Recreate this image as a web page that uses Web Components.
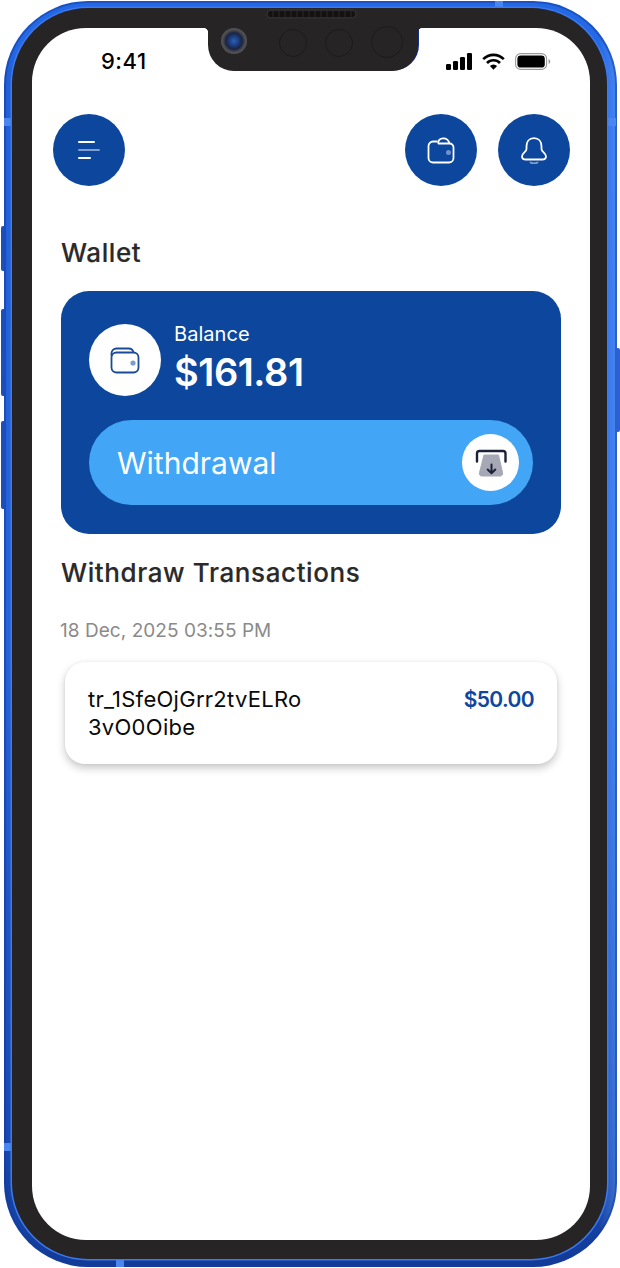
<!DOCTYPE html>
<html><head><meta charset="utf-8">
<style>
html,body{margin:0;padding:0;background:#fff;}
body{width:620px;height:1268px;overflow:hidden;font-family:"Inter","Liberation Sans",sans-serif;}
</style></head><body>
<template id="t-phone">
<style>
:host{display:block;box-sizing:border-box;position:relative;width:613px;height:1266px;margin:1px 0 0 4px;padding:7px 10px 8px 8px;border-radius:84px;
background:linear-gradient(90deg,rgba(0,0,60,.12) 0,transparent 2%,transparent 97%,rgba(120,175,255,.4) 100%),linear-gradient(180deg,#2468e6 0,#2a6ce8 50%,#1b4fbb 90%,#123a96 100%);box-shadow:inset 0 0 0 2px rgba(18,60,160,.5);}
.bezel{box-sizing:border-box;height:100%;padding:20px 17px 19px 20px;border-radius:76px;background:#272425;box-shadow:0 0 0 1.5px #3b7af0;position:relative;}
.screen{height:100%;background:#fff;border-radius:54px;overflow:hidden;}
.side{position:absolute;background:#1c4fb8;}
.l{left:-3px;width:3px;border-radius:2px 0 0 2px;}
.r{right:-3px;width:3px;border-radius:0 2px 2px 0;top:347px;height:84px;background:#2a62d6;}
.band{position:absolute;background:#4a86f0;}
.notch{position:absolute;left:196px;top:20px;width:210px;height:43px;background:#272425;border-radius:0 0 26px 26px;box-shadow:1.5px 0 0 -0.5px #15308c;}
.notch:before,.notch:after{content:"";position:absolute;top:0;width:4px;height:4px;}
.notch:before{left:-4px;background:radial-gradient(circle at 0 100%,transparent 3.6px,#272425 4.2px);}
.notch:after{right:-4px;background:radial-gradient(circle at 100% 100%,transparent 3.6px,#272425 4.2px);}
.speaker{position:absolute;left:264px;top:10px;width:87px;height:6px;border-radius:3px;background:repeating-linear-gradient(90deg,#131112 0 4px,#1f1c1d 4px 6px);box-shadow:0 0 0 2px #2e2b2c;}
.cam{position:absolute;border-radius:50%;}
.lens{left:217px;top:27px;width:26px;height:26px;background:radial-gradient(circle,#2d5fb5 0,#1d3c80 26%,#1a2440 44%,#4b4a4e 60%,#5b5a5e 80%,#3a383a 100%);}
.dot{border:1px solid #1d1b1c;box-sizing:border-box;background:#272425;}
</style>
<div class="side l" style="top:225px;height:45px"></div>
<div class="side l" style="top:308px;height:87px"></div>
<div class="side l" style="top:420px;height:88px"></div>
<div class="side r"></div>
<div class="band" style="left:0;top:117px;width:8px;height:8px"></div>
<div class="band" style="right:1px;top:117px;width:9px;height:8px"></div>
<div class="band" style="left:0;top:1142px;width:8px;height:8px"></div>
<div class="band" style="left:112px;bottom:0;width:8px;height:8px"></div>
<div class="band" style="left:491px;top:0;width:8px;height:7px"></div>
<div class="bezel">
<div class="screen"><slot></slot></div>
<div class="notch"></div>
</div>
<div class="speaker"></div>
<div class="cam lens"></div>
<div class="cam dot" style="left:275px;top:28px;width:28px;height:28px"></div>
<div class="cam dot" style="left:321px;top:28px;width:28px;height:28px"></div>
<div class="cam dot" style="left:367px;top:25px;width:32px;height:32px"></div>
</template>

<template id="t-status">
<style>
:host{display:flex;align-items:center;justify-content:space-between;height:34px;margin-top:16px;padding:0 39px 0 69px;color:#000;}
.time{font:500 22px/34px "Inter","Liberation Sans",sans-serif;letter-spacing:.5px;}
.icons{display:flex;align-items:center;gap:10px;}
svg{display:block;}
</style>
<span class="time">9:41</span>
<div class="icons">
<svg width="26" height="17" viewBox="0 0 26 17"><rect x="0" y="11" width="5" height="6" rx="1.2"/><rect x="7" y="8" width="5" height="9" rx="1.2"/><rect x="14" y="4" width="5" height="13" rx="1.2"/><rect x="21" y="0" width="5" height="17" rx="1.2"/></svg>
<svg width="23" height="17" viewBox="0 0 23 17" fill="none" stroke="#000" stroke-width="2.6"><path d="M1.2 6.2a14.5 14.5 0 0 1 20.6 0"/><path d="M5 10a9 9 0 0 1 13 0"/><path d="M11.5 16.8 7.9 13.1a5 5 0 0 1 7.2 0z" fill="#000" stroke="none"/></svg>
<svg width="36" height="17" viewBox="0 0 36 17"><rect x=".6" y=".6" width="31" height="15.8" rx="5" fill="none" stroke="#9a9a9a" stroke-width="1.1"/><rect x="2.4" y="2.4" width="27.4" height="12.2" rx="3.4"/><path d="M33.6 6v5c1-.4 1.7-1.4 1.7-2.5S34.600 6.400 33.600 6z" fill="#999"/></svg>
</div>
</template>

<template id="t-round">
<style>
:host{display:flex;align-items:center;justify-content:center;width:72px;height:72px;border-radius:50%;background:var(--bg,#0d479d);flex:none;}
svg,::slotted(svg){display:block;}
</style><slot></slot>
</template>

<template id="t-header">
<style>
:host{display:flex;align-items:center;justify-content:space-between;padding:0 20px 0 21px;margin-top:36px;}
.g{display:flex;gap:21px;}
</style>
<slot name="left"></slot><div class="g"><slot></slot></div>
</template>

<template id="t-title">
<style>
:host{display:block;font-weight:500;color:#2a2a2a;letter-spacing:.6px;-webkit-text-stroke:.15px #2a2a2a;}
</style><slot></slot>
</template>

<template id="t-balance">
<style>
:host{display:block;box-sizing:border-box;height:243px;margin:0 29px;padding:33px 28px 28px;border-radius:28px;background:#0d479d;color:#fff;}
.top{display:flex;align-items:flex-start;gap:13px;}
.lbl{font:400 20px/22px "Inter","Liberation Sans",sans-serif;margin-top:-1px;letter-spacing:.05px;}
.amt{font:600 38px/48px "Inter","Liberation Sans",sans-serif;margin-top:3px;letter-spacing:-.45px;}
.pill{display:flex;align-items:center;justify-content:space-between;height:85px;margin-top:24px;padding:0 14px 0 28px;border-radius:43px;background:#42a5f5;font:400 30px/36px "Inter","Liberation Sans",sans-serif;letter-spacing:0;}
.c{width:57px;height:57px;border-radius:50%;background:#fff;display:flex;align-items:center;justify-content:center;}
svg{display:block;}
</style>
<div class="top">
<slot name="avatar"></slot>
<div><div class="lbl">Balance</div><div class="amt">$161.81</div></div>
</div>
<div class="pill"><span>Withdrawal</span><div class="c">
<svg width="32" height="30" viewBox="0 0 32 30" fill="none"><path d="M9 7H23.500L27.500 24.500C28 26.500 27 28 25 28H7C5 28 4 26.500 4.500 24.500Z" fill="#a6a8b6" stroke="#a6a8b6" stroke-linejoin="round"/><path d="M2 13.500V5.500Q2 3 4.500 3H28Q30.500 3 30.500 5.500V13.500" stroke="#1c2238" stroke-width="2.400" fill="none" stroke-linecap="round"/><path d="M16.500 16.500V25M12.700 21.500 16.500 25.300 20.300 21.500" stroke="#1c2238" stroke-width="2" stroke-linecap="round" stroke-linejoin="round"/></svg>
</div></div>
</template>

<template id="t-tx">
<style>
:host{display:flex;justify-content:space-between;align-items:flex-start;box-sizing:border-box;width:492px;height:102px;margin:0 0 0 33px;padding:23px 23px 0;border-radius:20px;background:#fff;box-shadow:0 4px 8px rgba(0,0,0,.22),0 0 3px rgba(0,0,0,.06);}
.id{width:240px;font:400 22px/28px "Inter","Liberation Sans",sans-serif;color:#0a0a0a;letter-spacing:.28px;}
.amt{font:600 21px/28px "Inter","Liberation Sans",sans-serif;color:#0d47a1;letter-spacing:-.6px;margin-top:1px;}
</style>
<div class="id"><slot></slot></div><div class="amt"><slot name="amt"></slot></div>
</template>

<phone-frame>
<status-bar></status-bar>
<app-header>
<round-btn slot="left"><svg width="24" height="20" viewBox="0 0 24 20" stroke="#fff" stroke-width="2" stroke-linecap="round"><path d="M2 2h15"/><path d="M2 10h20" stroke="#7f9fd0"/><path d="M2 18h11"/></svg></round-btn>
<round-btn><svg width="28" height="27" viewBox="0 0 28 27" fill="none" stroke="#fff" stroke-width="1.800"><path d="M10.500 4.500H6A4.500 4.500 0 0 0 1.500 9V21A4.500 4.500 0 0 0 6 25.500H22A4.500 4.500 0 0 0 26.500 21V10.500A4 4 0 0 0 22.500 6.500H11"/><path d="M11 6.500C11.500 0 20.500-.500 22.500 6.500"/><circle cx="21.500" cy="15.500" r="1.600" fill="#6f93cc" stroke="#6f93cc"/></svg></round-btn>
<round-btn><svg width="26" height="27" viewBox="0 0 26 27" fill="none" stroke="#fff" stroke-width="1.800" stroke-linejoin="round"><path d="M13 1.200C8 1.200 5.500 5 5.500 9.500V12C5.500 15 1 16 1 19.500 1 21.500 2.500 22.500 5 22.500H21C23.500 22.500 25 21.500 25 19.500 25 16 20.500 15 20.500 12V9.500C20.500 5 18 1.200 13 1.200Z"/><path d="M9.500 25.500C11.500 26.500 14.500 26.500 16.500 25.500" stroke="#7f9fd0" stroke-linecap="round"/></svg></round-btn>
</app-header>
<section-title style="margin:51px 0 0 29px;font-size:26px;line-height:32px">Wallet</section-title>
<balance-card style="margin-top:22px">
<round-btn slot="avatar" style="--bg:#fff"><svg width="30" height="27" viewBox="0 0 30 27" fill="none" stroke="#1a4b98" stroke-width="1.800"><path d="M1.500 9V6.500A5 5 0 0 1 6.500 1.500H18.500A5 5 0 0 1 23.500 5.500"/><rect x="1.500" y="5.500" width="27" height="20" rx="5"/><circle cx="23" cy="16" r="1.700" fill="#7b9ccd" stroke="#7b9ccd"/></svg></round-btn>
</balance-card>
<section-title style="margin:22px 0 0 29px;font-size:26px;line-height:34px">Withdraw Transactions</section-title>
<tx-date>18 Dec, 2025 03:55 PM</tx-date>
<tx-row>tr_1SfeOjGrr2tvELRo<br>3vO0Oibe<span slot="amt">$50.00</span></tx-row>
</phone-frame>
<script>
function make(tag,tid,extra){
  customElements.define(tag,class extends HTMLElement{
    constructor(){super();const r=this.attachShadow({mode:"open"});
      if(tid)r.appendChild(document.getElementById(tid).content.cloneNode(true));
      else r.innerHTML=extra;}
  });
}
make("phone-frame","t-phone");
make("status-bar","t-status");
make("round-btn","t-round");
make("app-header","t-header");
make("section-title","t-title");
make("balance-card","t-balance");
make("tx-row","t-tx");
make("tx-date",null,'<style>:host{display:block;margin:29px 0 19px 28px;font:400 19px/24px "Inter","Liberation Sans",sans-serif;color:#8a8a8a;letter-spacing:.05px;}</style><slot></slot>');
</script>
</body></html>
